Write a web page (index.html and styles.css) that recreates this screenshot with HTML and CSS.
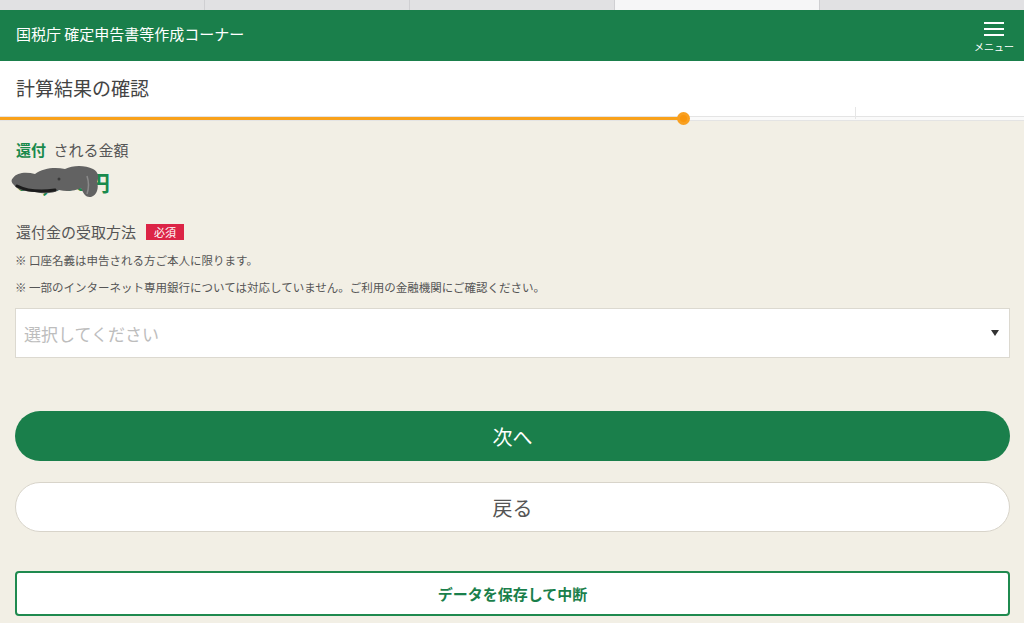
FILE: index.html
```html
<!DOCTYPE html>
<html lang="ja">
<head>
<meta charset="utf-8">
<title>計算結果の確認</title>
<link rel="stylesheet" href="styles.css">
</head>
<body>
<div class="tabs">
  <div class="tab"></div>
  <div class="tab"></div>
  <div class="tab"></div>
  <div class="tab active"></div>
  <div class="tab"></div>
</div>
<header class="topbar">
  <div class="site-title">国税庁 確定申告書等作成コーナー</div>
  <div class="menu">
    <svg class="menu-icon" width="20" height="14" viewBox="0 0 20 14">
      <rect x="0" y="0" width="20" height="2" fill="#fff"/>
      <rect x="0" y="6" width="20" height="2" fill="#fff"/>
      <rect x="0" y="12" width="20" height="2" fill="#fff"/>
    </svg>
    <span class="menu-label">メニュー</span>
  </div>
</header>
<div class="pagehead">
  <h1 class="page-title">計算結果の確認</h1>
</div>
<div class="progress">
  <div class="progress-fill"></div>
  <span class="progress-dot"></span>
  <span class="progress-tick"></span>
</div>
<main class="content">
  <div class="amount-label"><strong class="accent">還付</strong> される金額</div>
  <div class="amount">
    <span class="amount-value">00,000円</span>
    <svg class="scribble" width="92" height="34" viewBox="0 0 92 34">
      <path d="M2 14 C6 8 16 8 24 10 C32 4 44 3 54 5 C62 1 74 1 82 5 C88 8 88 14 86 18 C88 24 86 31 80 33 C74 34 72 28 70 24 C64 27 56 28 48 26 C42 30 32 30 24 28 C16 28 6 26 3 21 C0 18 0 16 2 14 Z" fill="#626262"/>
      <path d="M6 22 C16 27 30 28 44 26" stroke="#1c1c1c" stroke-width="3" fill="none" stroke-linecap="round"/>
      <path d="M76 12 C78 18 78 24 76 30" stroke="#8a8a8a" stroke-width="1.5" fill="none"/>
      <circle cx="48" cy="15" r="1.5" fill="#3a3a3a"/>
    </svg>
  </div>
  <div class="field-label">還付金の受取方法 <span class="badge">必須</span></div>
  <p class="note">※ 口座名義は申告される方ご本人に限ります。</p>
  <p class="note note-2">※ 一部のインターネット専用銀行については対応していません。ご利用の金融機関にご確認ください。</p>
  <div class="select">
    <span class="placeholder">選択してください</span>
    <span class="caret"></span>
  </div>
  <button class="btn btn-primary">次へ</button>
  <button class="btn btn-secondary">戻る</button>
  <button class="btn-save">データを保存して中断</button>
</main>
</body>
</html>
```
FILE: styles.css
```css
html, body {
  margin: 0;
  padding: 0;
}
body {
  width: 1024px;
  height: 623px;
  overflow: hidden;
  background: #f2efe5;
  font-family: "Noto Sans CJK JP", "Noto Sans", sans-serif;
  color: #555;
}
.tabs {
  display: flex;
  height: 10px;
  background: #e1e1e3;
}
.tab {
  flex: 1;
  border-right: 1px solid #cfcfd2;
}
.tab.active {
  background: #f6f6f7;
}
.tab:last-child {
  border-right: none;
}
.topbar {
  height: 51px;
  background: #1a7f4b;
  display: flex;
  align-items: center;
  justify-content: space-between;
  padding: 0 10px 0 16px;
}
.site-title {
  color: #fff;
  font-size: 15px;
  line-height: 20px;
  margin-top: -4px;
}
.menu {
  display: flex;
  flex-direction: column;
  align-items: center;
  width: 40px;
  margin-top: 4px;
}
.menu-icon {
  display: block;
}
.menu-label {
  color: #fff;
  font-size: 10px;
  line-height: 12px;
  margin-top: 5px;
  white-space: nowrap;
}
.pagehead {
  height: 55px;
  background: #fff;
  display: flex;
  align-items: center;
  padding-left: 16px;
}
.page-title {
  margin: 0;
  font-size: 19px;
  font-weight: 400;
  color: #444;
  line-height: 24px;
  margin-top: -2px;
}
.progress {
  position: relative;
  height: 3px;
  background: #fafafa;
  border-top: 1px solid #e4e4e4;
  border-bottom: 1px solid #e4e4e4;
}
.progress-fill {
  width: 683px;
  height: 3px;
  background: #f9a21b;
}
.progress-dot {
  position: absolute;
  left: 677px;
  top: -5px;
  width: 7px;
  height: 7px;
  border-radius: 50%;
  background: #f9960d;
  border: 3px solid rgba(250, 180, 70, 0.35);
}
.progress-tick {
  position: absolute;
  left: 855px;
  top: -10px;
  width: 1px;
  height: 12px;
  background: #e6e6e6;
}
.content {
  padding: 19px 14px 0 15px;
  display: flex;
  flex-direction: column;
}
.amount-label {
  font-size: 15px;
  line-height: 20px;
  color: #555;
  padding-left: 1px;
}
.accent {
  color: #1a8a4c;
  font-weight: 700;
  margin-right: 4px;
}
.amount {
  position: relative;
  margin-top: 7px;
  height: 28px;
}
.amount-value {
  font-size: 22px;
  line-height: 28px;
  font-weight: 700;
  color: #1a8a4c;
  padding-left: 1px;
}
.scribble {
  position: absolute;
  left: -4px;
  top: -3px;
}
.field-label {
  margin-top: 26px;
  font-size: 15px;
  line-height: 22px;
  color: #555;
  display: flex;
  align-items: center;
  padding-left: 1px;
}
.badge {
  display: inline-block;
  margin-left: 10px;
  background: #dc2446;
  color: #fff;
  font-size: 11px;
  line-height: 16px;
  padding: 0 8px;
}
.note {
  margin: 9px 0 0;
  font-size: 11.5px;
  line-height: 16px;
  color: #555;
}
.note-2 {
  margin-top: 11px;
}
.select {
  margin-top: 13px;
  height: 48px;
  background: #fff;
  border: 1px solid #dcd9d0;
  display: flex;
  align-items: center;
  justify-content: space-between;
  padding: 0 10px 0 8px;
}
.placeholder {
  font-size: 17px;
  color: #bdbdbd;
}
.caret {
  width: 0;
  height: 0;
  border-left: 4px solid transparent;
  border-right: 4px solid transparent;
  border-top: 6px solid #333;
}
.btn {
  display: block;
  width: 100%;
  height: 50px;
  border-radius: 25px;
  font-family: inherit;
  font-size: 20px;
  cursor: pointer;
}
.btn-primary {
  margin-top: 53px;
  background: #1a7f4b;
  color: #fff;
  border: none;
}
.btn-secondary {
  margin-top: 21px;
  background: #fff;
  color: #555;
  border: 1px solid #d8d4ca;
}
.btn-save {
  margin-top: 39px;
  height: 45px;
  background: #fff;
  border: 2px solid #1f8a4f;
  border-radius: 4px;
  color: #1a7f4b;
  font-family: inherit;
  font-size: 15px;
  font-weight: 700;
}
```
